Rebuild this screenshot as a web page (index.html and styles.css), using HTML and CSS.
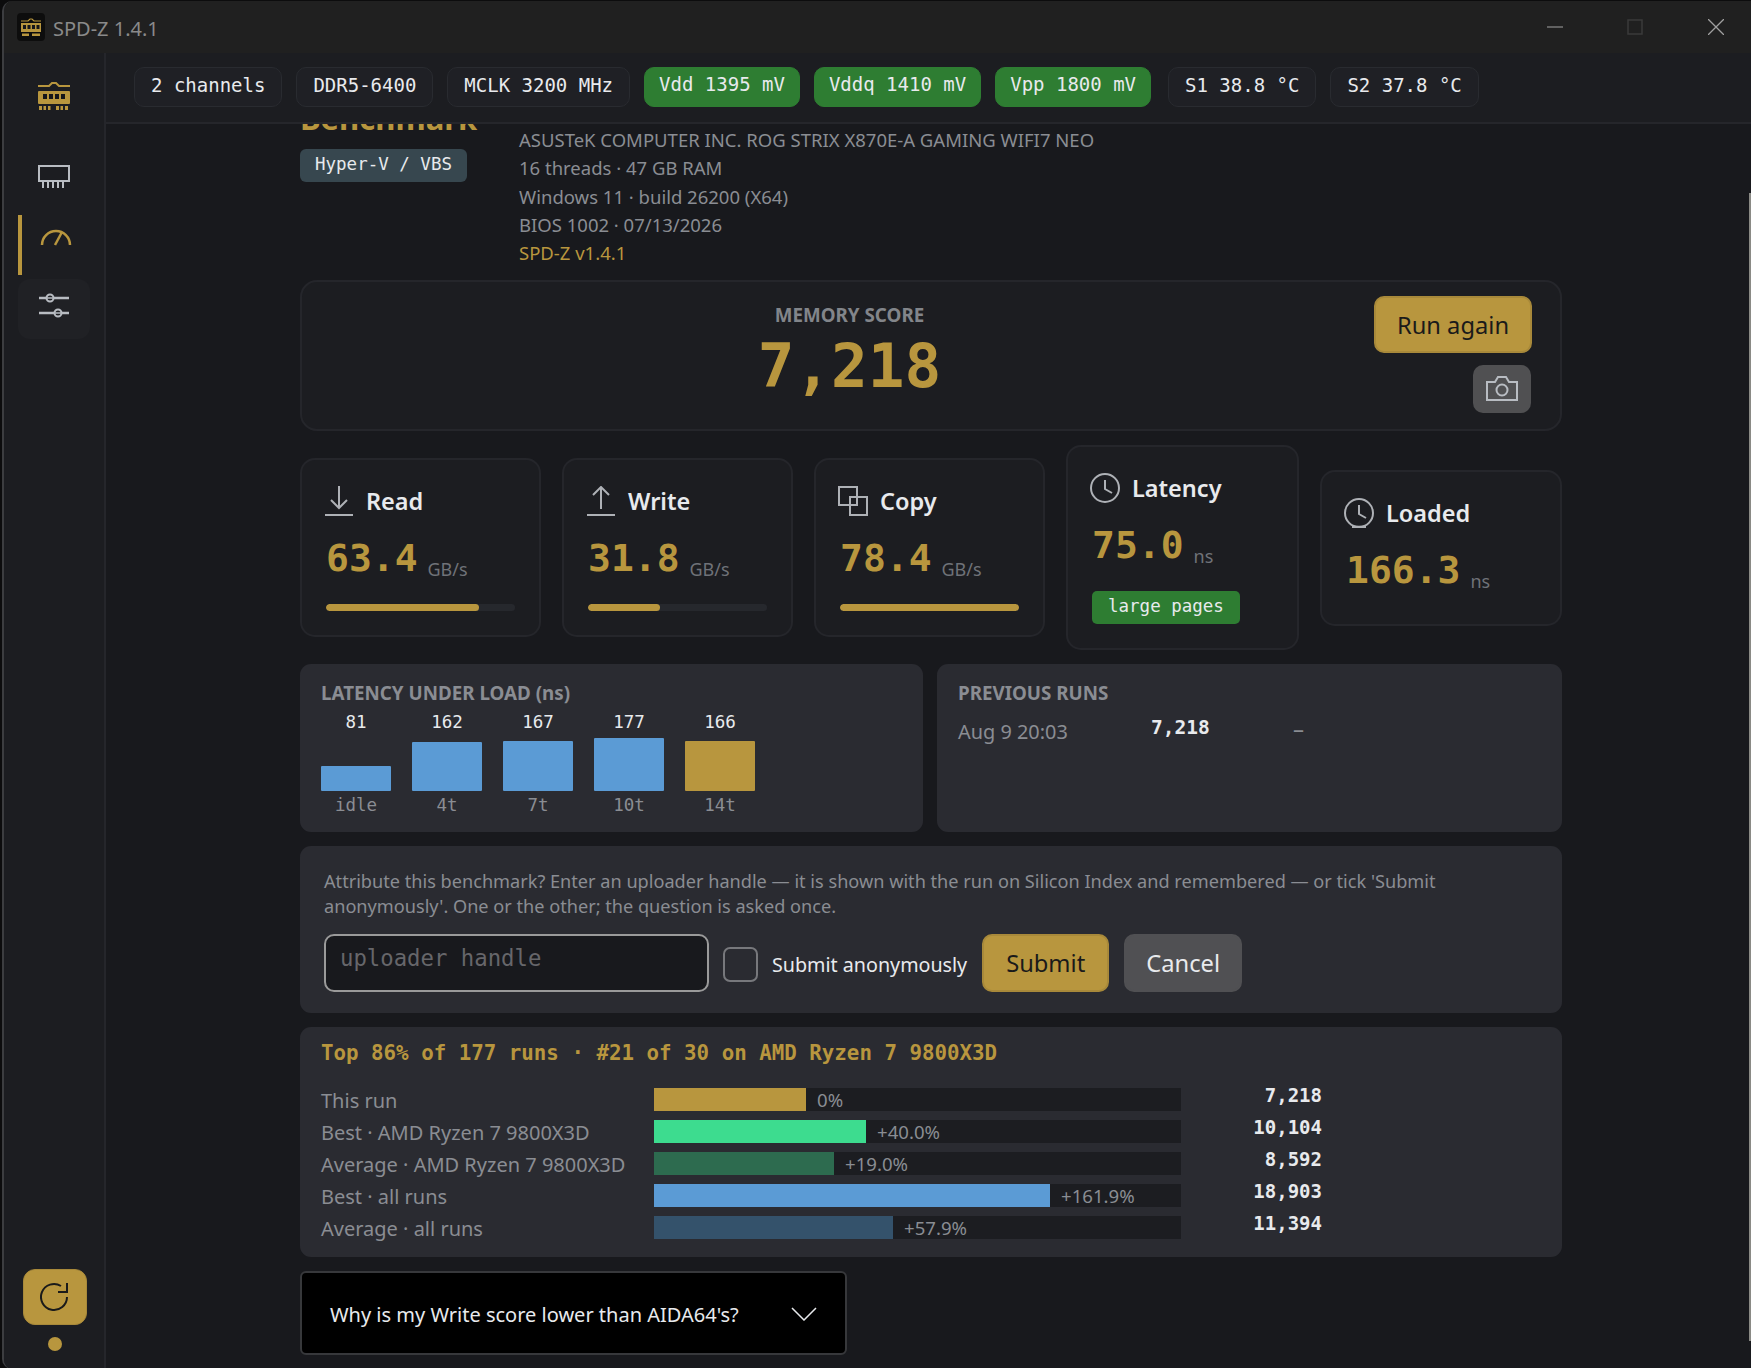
FILE: index.html
```html
<!DOCTYPE html>
<html lang="en">
<head>
    <meta charset="UTF-8">
    <title>SPD-Z 1.4.1</title>
    <link rel="stylesheet" href="styles.css">
</head>
<body>
<div class="window">
    <header class="titlebar">
        <svg class="app-icon" viewBox="0 0 28 28">
            <rect width="28" height="28" rx="4" fill="#0d0d0d"/>
            <path d="M4 8H11L13 6H15L17 8H24" fill="none" stroke="#b8963e" stroke-width="1.2"/>
            <rect x="4" y="10" width="20" height="9" fill="#b8963e"/>
            <path d="M6 12h3v4H6zM10.500 12h3v4h-3zM15 12h3v4h-3zM19.500 12h3v4h-3z" fill="#15161a"/>
            <path d="M5 20.500h7v2.500H5zM15 20.500h8v2.500h-8z" fill="#b8963e"/>
        </svg>
        <span class="app-title">SPD-Z 1.4.1</span>
        <div class="win-controls">
            <svg class="win-min" viewBox="0 0 16 16"><path d="M0 8H16" stroke="#777" stroke-width="1.500"/></svg>
            <svg class="win-max" viewBox="0 0 16 16"><rect x="1" y="1" width="14" height="14" fill="none" stroke="#3a3a3a" stroke-width="1.500"/></svg>
            <svg class="win-close" viewBox="0 0 16 16"><path d="M0 0L16 16M16 0L0 16" stroke="#a0a0a0" stroke-width="1.300"/></svg>
        </div>
    </header>

    <div class="shell">
        <nav class="sidebar">
            <div class="nav-item nav-logo">
                <svg viewBox="0 0 32 28" width="32" height="28">
                    <path d="M0 4H11L14 1H18L21 4H32" fill="none" stroke="#b8963e" stroke-width="2"/>
                    <rect y="9" width="32" height="13" rx="1" fill="#b8963e"/>
                    <path d="M5 12h4v5H5zM11 12h4v5h-4zM17 12h4v5h-4zM23 12h4v5h-4z" fill="#15161a"/>
                    <path d="M1 24h3v4H1zM5.500 24h2.500v4H5.500zM10 24h2.500v4H10zM18 24h3v4h-3zM22.500 24h2.500v4h-2.500zM27 24h3v4h-3z" fill="#b8963e"/>
                </svg>
            </div>
            <div class="nav-item nav-ram">
                <svg viewBox="0 0 32 24" width="32" height="24">
                    <rect x="1" y="1" width="30" height="15" fill="none" stroke="#b8bcc2" stroke-width="2"/>
                    <path d="M5 17v6M10 17v6M15 17v6M20 17v6M25 17v6" stroke="#b8bcc2" stroke-width="2"/>
                </svg>
            </div>
            <div class="nav-item nav-active">
                <svg viewBox="0 0 32 20" width="32" height="20">
                    <path d="M2 17A14 14 0 0 1 30 17" fill="none" stroke="#b8963e" stroke-width="2.500"/>
                    <path d="M15 17L22 4" stroke="#b8963e" stroke-width="2.500"/>
                </svg>
            </div>
            <div class="nav-item nav-tune">
                <svg viewBox="0 0 32 26" width="32" height="26">
                    <path d="M1 5H31M1 20H31" stroke="#b8bcc2" stroke-width="2.500"/>
                    <circle cx="12" cy="5" r="3.500" fill="#1f2024" stroke="#b8bcc2" stroke-width="2"/>
                    <circle cx="20" cy="20" r="3.500" fill="#1f2024" stroke="#b8bcc2" stroke-width="2"/>
                    <path d="M9 5H15M17 20H23" stroke="#b8bcc2" stroke-width="1.500"/>
                </svg>
            </div>
            <div class="side-bottom">
                <button class="refresh-btn">
                    <svg viewBox="0 0 30 32" width="30" height="32">
                        <path d="M27 16A13 13 0 1 1 21 5" fill="none" stroke="#1a1a1a" stroke-width="2"/>
                        <path d="M27 2V11H18" fill="none" stroke="#1a1a1a" stroke-width="2"/>
                    </svg>
                </button>
                <span class="status-dot"></span>
            </div>
        </nav>

        <div class="content">
            <div class="chips">
                <span class="chip">2 channels</span>
                <span class="chip">DDR5-6400</span>
                <span class="chip">MCLK 3200 MHz</span>
                <span class="chip chip-ok">Vdd 1395 mV</span>
                <span class="chip chip-ok">Vddq 1410 mV</span>
                <span class="chip chip-ok">Vpp 1800 mV</span>
                <span class="chip chip-sensor">S1 38.8 °C</span>
                <span class="chip">S2 37.8 °C</span>
            </div>

            <main class="main">
                <div class="scroll-thumb"></div>
                <div class="page">
                    <section class="head">
                        <div class="head-left">
                            <h1>Benchmark</h1>
                            <span class="tag">Hyper-V / VBS</span>
                        </div>
                        <div class="sysinfo">
                            <div>ASUSTeK COMPUTER INC. ROG STRIX X870E-A GAMING WIFI7 NEO</div>
                            <div>16 threads · 47 GB RAM</div>
                            <div>Windows 11 · build 26200 (X64)</div>
                            <div>BIOS 1002 · 07/13/2026</div>
                            <div class="gold-line">SPD-Z v1.4.1</div>
                        </div>
                    </section>

                    <section class="score-card">
                        <div class="score-main">
                            <div class="score-label">MEMORY SCORE</div>
                            <div class="score-value">7,218</div>
                        </div>
                        <div class="score-actions">
                            <button class="btn btn-gold btn-run">Run again</button>
                            <button class="btn-camera">
                                <svg viewBox="0 0 32 26" width="32" height="26">
                                    <path d="M1 7H9L12 2H20L23 7H31V25H1Z" fill="none" stroke="#b8bcc2" stroke-width="2"/>
                                    <circle cx="16" cy="15" r="5.500" fill="none" stroke="#b8bcc2" stroke-width="2"/>
                                </svg>
                            </button>
                        </div>
                    </section>

                    <section class="stats">
                        <div class="stat">
                            <div class="stat-head">
                                <svg viewBox="0 0 30 30" width="30" height="30">
                                    <path d="M15 0V22M7 14L15 22L23 14" fill="none" stroke="#aeb1b6" stroke-width="2"/>
                                    <path d="M1 29H29" stroke="#aeb1b6" stroke-width="2"/>
                                </svg>
                                <span>Read</span>
                            </div>
                            <div class="stat-value"><b>63.4</b><span>GB/s</span></div>
                            <div class="meter"><i style="width: 81%"></i></div>
                        </div>
                        <div class="stat">
                            <div class="stat-head">
                                <svg viewBox="0 0 30 30" width="30" height="30">
                                    <path d="M15 23V1M7 9L15 1L23 9" fill="none" stroke="#aeb1b6" stroke-width="2"/>
                                    <path d="M1 29H29" stroke="#aeb1b6" stroke-width="2"/>
                                </svg>
                                <span>Write</span>
                            </div>
                            <div class="stat-value"><b>31.8</b><span>GB/s</span></div>
                            <div class="meter"><i style="width: 40.500%"></i></div>
                        </div>
                        <div class="stat">
                            <div class="stat-head">
                                <svg viewBox="0 0 30 30" width="30" height="30">
                                    <rect x="1" y="1" width="18" height="18" fill="none" stroke="#aeb1b6" stroke-width="2"/>
                                    <rect x="12" y="11" width="17" height="18" fill="none" stroke="#aeb1b6" stroke-width="2"/>
                                </svg>
                                <span>Copy</span>
                            </div>
                            <div class="stat-value"><b>78.4</b><span>GB/s</span></div>
                            <div class="meter"><i style="width: 100%"></i></div>
                        </div>
                        <div class="stat">
                            <div class="stat-head">
                                <svg viewBox="0 0 30 30" width="30" height="30">
                                    <circle cx="15" cy="15" r="14" fill="none" stroke="#aeb1b6" stroke-width="2"/>
                                    <path d="M15 7V16L22 20" fill="none" stroke="#aeb1b6" stroke-width="2"/>
                                </svg>
                                <span>Latency</span>
                            </div>
                            <div class="stat-value"><b>75.0</b><span>ns</span></div>
                            <div class="stat-badge">large pages</div>
                        </div>
                        <div class="stat stat-last">
                            <div class="stat-head">
                                <svg viewBox="0 0 30 30" width="30" height="30">
                                    <circle cx="15" cy="15" r="14" fill="none" stroke="#aeb1b6" stroke-width="2"/>
                                    <path d="M15 7V16L22 20" fill="none" stroke="#aeb1b6" stroke-width="2"/>
                                    <path d="M8 29H22" stroke="#aeb1b6" stroke-width="2.500"/>
                                </svg>
                                <span>Loaded</span>
                            </div>
                            <div class="stat-value"><b>166.3</b><span>ns</span></div>
                        </div>
                    </section>

                    <section class="two-col">
                        <div class="panel">
                            <div class="panel-title">LATENCY UNDER LOAD (ns)</div>
                            <div class="load-chart">
                                <div class="load-col"><div class="load-num">81</div><div class="load-track"><i style="height: 25px"></i></div><div class="load-name">idle</div></div>
                                <div class="load-col"><div class="load-num">162</div><div class="load-track"><i style="height: 49px"></i></div><div class="load-name">4t</div></div>
                                <div class="load-col"><div class="load-num">167</div><div class="load-track"><i style="height: 50px"></i></div><div class="load-name">7t</div></div>
                                <div class="load-col"><div class="load-num">177</div><div class="load-track"><i style="height: 53px"></i></div><div class="load-name">10t</div></div>
                                <div class="load-col"><div class="load-num">166</div><div class="load-track"><i class="bar-gold" style="height: 50px"></i></div><div class="load-name">14t</div></div>
                            </div>
                        </div>
                        <div class="panel">
                            <div class="panel-title">PREVIOUS RUNS</div>
                            <div class="run-row">
                                <span class="run-date">Aug 9 20:03</span>
                                <span class="run-score">7,218</span>
                                <span class="run-delta">–</span>
                            </div>
                        </div>
                    </section>

                    <section class="panel submit-panel">
                        <p class="submit-note">Attribute this benchmark? Enter an uploader handle — it is shown with the run on Silicon Index and remembered — or tick 'Submit anonymously'. One or the other; the question is asked once.</p>
                        <div class="submit-row">
                            <input class="handle-input" type="text" placeholder="uploader handle">
                            <label class="anon">
                                <input type="checkbox">
                                <span>Submit anonymously</span>
                            </label>
                            <button class="btn btn-gold btn-submit">Submit</button>
                            <button class="btn btn-grey btn-cancel">Cancel</button>
                        </div>
                    </section>

                    <section class="panel rank-panel">
                        <div class="rank-title">Top 86% of 177 runs · #21 of 30 on AMD Ryzen 7 9800X3D</div>
                        <div class="rank-grid">
                            <div class="rank-label">This run</div>
                            <div class="rank-track"><i class="bar-gold" style="width: 152px"></i><span>0%</span></div>
                            <div class="rank-num">7,218</div>

                            <div class="rank-label">Best · AMD Ryzen 7 9800X3D</div>
                            <div class="rank-track"><i class="bar-green" style="width: 212px"></i><span>+40.0%</span></div>
                            <div class="rank-num">10,104</div>

                            <div class="rank-label">Average · AMD Ryzen 7 9800X3D</div>
                            <div class="rank-track"><i class="bar-green-dim" style="width: 180px"></i><span>+19.0%</span></div>
                            <div class="rank-num">8,592</div>

                            <div class="rank-label">Best · all runs</div>
                            <div class="rank-track"><i class="bar-blue" style="width: 396px"></i><span>+161.9%</span></div>
                            <div class="rank-num">18,903</div>

                            <div class="rank-label">Average · all runs</div>
                            <div class="rank-track"><i class="bar-blue-dim" style="width: 239px"></i><span>+57.9%</span></div>
                            <div class="rank-num">11,394</div>
                        </div>
                    </section>

                    <button class="faq">
                        <span>Why is my Write score lower than AIDA64's?</span>
                        <svg viewBox="0 0 26 14" width="26" height="14"><path d="M1 1L13 13L25 1" fill="none" stroke="#e8eaed" stroke-width="1.500"/></svg>
                    </button>
                </div>
            </main>
        </div>
    </div>
</div>
</body>
</html>
```

FILE: styles.css
```css
* { box-sizing: border-box; }

html, body {
    height: 100%;
    margin: 0;
}

body {
    background-color: #0c0c0d;
    color: #e8eaed;
    font-family: "Noto Sans", "Open Sans", sans-serif;
    font-size: 18.500px;
    overflow: hidden;
}

button {
    font-family: inherit;
    cursor: pointer;
}

.window {
    display: flex;
    flex-direction: column;
    height: 100vh;
    margin: 1px 0 0 2px;
    border-left: 2px solid #3c3d40;
    border-radius: 10px 0 0 10px;
    overflow: hidden;
    background-color: #18191d;
}

/* title bar */
.titlebar {
    display: flex;
    align-items: center;
    flex: none;
    height: 52px;
    padding: 0 0 0 13px;
    background-color: #202020;
}
.app-icon {
    width: 28px;
    height: 28px;
    margin-right: 8px;
}
.app-title {
    padding-top: 3px;
    color: #8a8a8a;
    font-size: 20px;
}
.win-controls {
    display: flex;
    align-items: center;
    margin-left: auto;
    padding-right: 27px;
}
.win-controls svg {
    width: 16px;
    height: 16px;
}
.win-controls .win-max { margin: 0 65px 0 64px; }

.shell {
    display: flex;
    flex: 1;
    min-height: 0;
}

/* sidebar */
.sidebar {
    display: flex;
    flex-direction: column;
    align-items: flex-start;
    flex: none;
    width: 102px;
    padding: 29px 0 0 14px;
    background-color: #1c1d21;
    border-right: 2px solid #25262b;
}
.nav-item {
    display: flex;
    justify-content: center;
    width: 72px;
}
.nav-logo svg { margin-left: 0; }
.nav-ram { margin-top: 55px; }
.nav-active {
    align-items: flex-start;
    height: 60px;
    margin-top: 26px;
    padding-top: 13px;
    border-left: 4px solid #b8963e;
}
.nav-tune {
    align-items: center;
    height: 60px;
    margin-top: 4px;
    padding-bottom: 6px;
    background-color: #202125;
    border-radius: 12px;
}
.side-bottom {
    display: flex;
    flex-direction: column;
    align-items: center;
    width: 64px;
    margin: auto 0 18px 5px;
}
.refresh-btn {
    display: flex;
    justify-content: center;
    align-items: center;
    width: 64px;
    height: 56px;
    padding: 0;
    background-color: #b8963e;
    border: 1px solid #a8893a;
    border-radius: 12px;
}
.status-dot {
    width: 14px;
    height: 14px;
    margin-top: 12px;
    background-color: #b8963e;
    border-radius: 50%;
}

.content {
    display: flex;
    flex-direction: column;
    flex: 1;
    min-width: 0;
}

/* top chips */
.chips {
    display: flex;
    align-items: center;
    gap: 14px;
    flex: none;
    height: 71px;
    padding: 0 0 2px 28px;
    background-color: #1c1d21;
    border-bottom: 2px solid #25262b;
}
.chip {
    display: flex;
    align-items: center;
    height: 40px;
    padding: 0 16px 3px;
    background-color: #1f2025;
    border: 1px solid #292b30;
    border-radius: 10px;
    font-family: "DejaVu Sans Mono", monospace;
    font-size: 19px;
    white-space: nowrap;
}
.chip-ok {
    padding: 0 14px 5px;
    background-color: #2e7d32;
    border-color: #2e7d32;
}
.chip-sensor { margin-left: 3px; }

/* main scroll area */
.main {
    position: relative;
    flex: 1;
    min-height: 0;
    overflow: hidden;
    padding: 0 189px 0 194px;
}
.scroll-thumb {
    position: absolute;
    top: 69px;
    right: 0;
    width: 2px;
    height: 1148px;
    background-color: #8a8a85;
}
.page {
    display: flex;
    flex-direction: column;
    gap: 14px;
    margin-top: -26px;
}

.head {
    display: flex;
    margin-bottom: -1px;
}
.head-left {
    width: 219px;
    flex: none;
}
.head-left h1 {
    margin: 0 0 11px;
    color: #b8963e;
    font-size: 31px;
    line-height: 40px;
    font-weight: 700;
}
.tag {
    display: inline-block;
    padding: 0 15px;
    height: 33px;
    line-height: 31px;
    background-color: #37474f;
    border-radius: 6px;
    font-family: "DejaVu Sans Mono", monospace;
    font-size: 17.500px;
}
.sysinfo {
    padding-top: 28px;
    color: #8a8d93;
    line-height: 28.300px;
}
.gold-line { color: #b8963e; }

/* score */
.score-card {
    display: flex;
    height: 151px;
    padding: 14px 28px 0 23px;
    background-color: #1c1d21;
    border: 2px solid #25262b;
    border-radius: 17px;
}
.score-main {
    flex: 1;
    padding-top: 5px;
    text-align: center;
}
.score-label {
    color: #82858a;
    font-size: 18.800px;
    font-weight: 700;
    line-height: 28px;
}
.score-value {
    color: #b8963e;
    font-family: "DejaVu Sans Mono", monospace;
    font-size: 61px;
    font-weight: 700;
    line-height: 73px;
}
.score-actions {
    display: flex;
    flex-direction: column;
    align-items: flex-end;
    gap: 12px;
    width: 158px;
}
.btn {
    height: 58px;
    border-radius: 10px;
    font-size: 23.700px;
}
.btn-gold {
    background-color: #b8963e;
    border: 2px solid #a8893a;
    color: #1a1a1a;
}
.btn-grey {
    background-color: #505053;
    border: 2px solid #505053;
    color: #e8eaed;
}
.btn-run { width: 158px; height: 57px; }
.btn-camera {
    display: flex;
    justify-content: center;
    align-items: center;
    width: 58px;
    height: 48px;
    margin-right: 1px;
    padding: 0 0 3px;
    background-color: #505052;
    border: none;
    border-radius: 10px;
}

/* stat cards */
.stats {
    display: grid;
    grid-template-columns: 241px 231px 231px 233px 242px;
    justify-content: space-between;
    align-items: center;
}
.stat {
    padding: 25px 24px 24px;
    background-color: #1c1d21;
    border: 2px solid #25262b;
    border-radius: 15px;
}
.stat-last { padding-bottom: 31px; }
.stat-head {
    display: flex;
    align-items: center;
    gap: 12px;
    font-size: 23.500px;
    font-weight: 600;
}
.stat-head svg { margin-left: -2px; }
.stat-value {
    display: flex;
    align-items: flex-end;
    gap: 10px;
    margin-top: 18px;
}
.stat-value b {
    color: #b8963e;
    font-family: "DejaVu Sans Mono", monospace;
    font-size: 38px;
    line-height: 46px;
}
.stat-value span {
    color: #6f7278;
    font-size: 18px;
    line-height: 24px;
}
.meter {
    height: 7px;
    margin-top: 23px;
    background-color: #26282d;
    border-radius: 4px;
    overflow: hidden;
}
.meter i {
    display: block;
    height: 100%;
    background-color: #b8963e;
    border-radius: 4px;
}
.stat-badge {
    display: inline-block;
    height: 33px;
    margin-top: 23px;
    padding: 0 16px;
    background-color: #2e7d32;
    border-radius: 5px;
    font-family: "DejaVu Sans Mono", monospace;
    font-size: 17.500px;
    line-height: 31px;
}

/* panels */
.panel {
    background-color: #2a2b31;
    border-radius: 11px;
}
.two-col {
    display: grid;
    grid-template-columns: 623px 625px;
    justify-content: space-between;
}
.two-col .panel {
    height: 168px;
    padding: 15px 21px 0;
}
.panel-title {
    color: #8a8d93;
    font-size: 18.800px;
    font-weight: 700;
    line-height: 28px;
}
.load-chart {
    display: flex;
    gap: 21px;
    margin-top: 3px;
}
.load-col {
    width: 70px;
    font-family: "DejaVu Sans Mono", monospace;
    font-size: 17.500px;
    text-align: center;
}
.load-num { line-height: 24px; }
.load-track {
    display: flex;
    align-items: flex-end;
    height: 57px;
}
.load-track i {
    display: block;
    width: 100%;
    background-color: #5b9bd5;
    border-radius: 1px;
}
.load-name {
    margin-top: 2px;
    color: #8a8d93;
    line-height: 24px;
}
.load-track i.bar-gold { background-color: #b8963e; }

.run-row {
    display: flex;
    align-items: flex-start;
    margin-top: 6px;
    line-height: 30px;
}
.run-date {
    width: 193px;
    padding-top: 4px;
    color: #8a8d93;
    font-size: 19.900px;
}
.run-score {
    width: 142px;
    font-family: "DejaVu Sans Mono", monospace;
    font-size: 19.500px;
    font-weight: 700;
}
.run-delta {
    color: #8a8d93;
    font-size: 22px;
}

.submit-panel {
    height: 167px;
    padding: 23px 24px 0;
}
.submit-note {
    margin: 0;
    color: #8a8d93;
    font-size: 18.150px;
    line-height: 25px;
}
.submit-row {
    display: flex;
    align-items: center;
    margin-top: 15px;
}
.handle-input {
    width: 385px;
    height: 58px;
    padding: 0 14px 10px;
    background-color: #18191d;
    border: 2px solid #9a9a9a;
    border-radius: 10px;
    color: #e8eaed;
    font-family: "DejaVu Sans Mono", monospace;
    font-size: 22.300px;
}
.handle-input::placeholder { color: #66666a; }
.anon {
    display: flex;
    align-items: center;
    gap: 14px;
    margin-left: 14px;
    padding-top: 2px;
    font-size: 19.700px;
}
.anon input {
    appearance: none;
    width: 35px;
    height: 35px;
    margin: 0;
    border: 2px solid #77787c;
    border-radius: 7px;
}
.btn-submit {
    width: 127px;
    margin-left: 15px;
}
.btn-cancel {
    width: 118px;
    margin-left: 15px;
}

.rank-panel {
    height: 230px;
    padding: 12px 21px 0;
}
.rank-title {
    color: #b8963e;
    font-family: "DejaVu Sans Mono", monospace;
    font-size: 20.800px;
    font-weight: 700;
    line-height: 28px;
}
.rank-grid {
    display: grid;
    grid-template-columns: 333px 527px 141px;
    grid-auto-rows: 23px;
    row-gap: 9px;
    align-items: center;
    margin-top: 21px;
}
.rank-label {
    padding-top: 2px;
    color: #8a8d93;
    font-size: 20px;
    white-space: nowrap;
}
.rank-track {
    display: flex;
    align-items: center;
    gap: 11px;
    height: 23px;
    background-color: #1c1d21;
    color: #8a8d93;
    font-size: 18.600px;
}
.rank-track i {
    display: block;
    height: 100%;
}
.bar-gold { background-color: #b8963e; }
.bar-green { background-color: #3ddc8f; }
.bar-green-dim { background-color: #2d6b4f; }
.bar-blue { background-color: #5b9bd5; }
.bar-blue-dim { background-color: #34526b; }
.rank-num {
    padding-bottom: 9px;
    font-family: "DejaVu Sans Mono", monospace;
    font-size: 19px;
    font-weight: 700;
    text-align: right;
}

.faq {
    display: flex;
    align-items: center;
    justify-content: space-between;
    width: 547px;
    height: 84px;
    padding: 2px 28px 0 28px;
    background-color: #000;
    border: 2px solid #37383b;
    border-radius: 6px;
    color: #e8eaed;
    font-size: 20px;
}
```
